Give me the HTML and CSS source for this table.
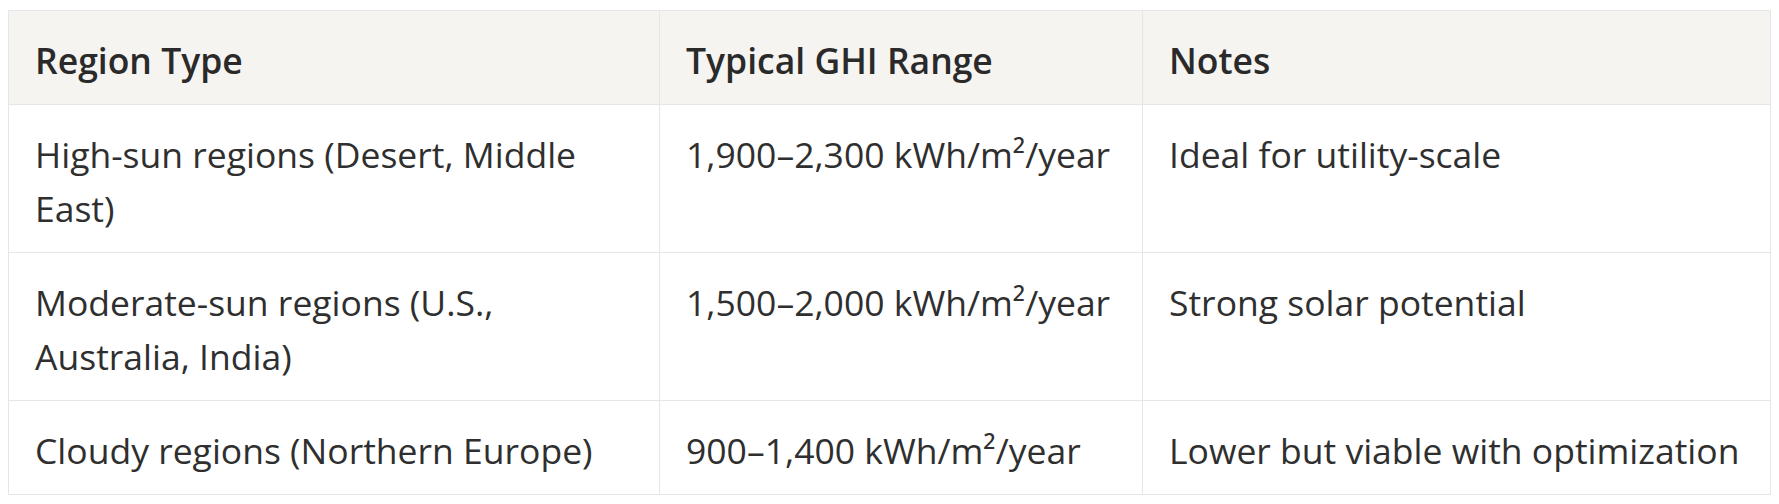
FILE: index.html
```html
<!DOCTYPE html>
<html lang="en">
<head>
<meta charset="utf-8">
<title>Solar irradiance by region</title>
<link rel="stylesheet" href="styles.css">
</head>
<body>
<table class="ghi-table">
  <colgroup>
    <col class="col-region">
    <col class="col-range">
    <col class="col-notes">
  </colgroup>
  <thead>
    <tr>
      <th>Region Type</th>
      <th>Typical GHI Range</th>
      <th>Notes</th>
    </tr>
  </thead>
  <tbody>
    <tr>
      <td>High-sun regions (Desert, Middle East)</td>
      <td class="nowrap">1,900–2,300 kWh/m²/year</td>
      <td class="nowrap">Ideal for utility-scale</td>
    </tr>
    <tr>
      <td>Moderate-sun regions (U.S., Australia, India)</td>
      <td class="nowrap">1,500–2,000 kWh/m²/year</td>
      <td class="nowrap">Strong solar potential</td>
    </tr>
    <tr>
      <td>Cloudy regions (Northern Europe)</td>
      <td class="nowrap">900–1,400 kWh/m²/year</td>
      <td class="nowrap">Lower but viable with optimization</td>
    </tr>
  </tbody>
</table>
</body>
</html>
```
FILE: styles.css
```css
html, body {
  background: #ffffff;
}
body {
  margin: 8px;
  font-family: "Open Sans", "Noto Sans", "DejaVu Sans", sans-serif;
  color: #2f2f2f;
}
.ghi-table {
  width: 100%;
  margin-top: 2px;
  border-collapse: collapse;
  table-layout: fixed;
  font-size: 35.5px;
  line-height: 54px;
}
.col-region {
  width: 651px;
}
.col-range {
  width: 483px;
}
.ghi-table th,
.ghi-table td {
  border: 1px solid #e6e6e6;
  padding: 22px 26px 17px;
  text-align: left;
  vertical-align: top;
}
.ghi-table th {
  background: #f5f4f0;
  font-weight: 600;
  color: #2a2a2a;
}
.ghi-table td {
  font-weight: 400;
}
.ghi-table .nowrap {
  white-space: nowrap;
}
```
